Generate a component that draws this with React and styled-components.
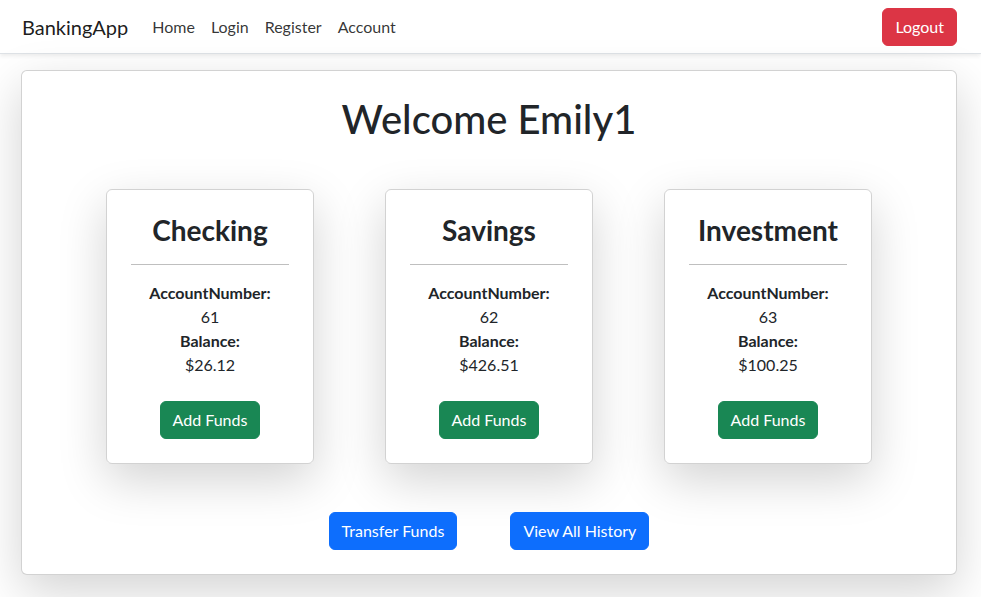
import React from 'react';
import styled, { createGlobalStyle } from 'styled-components';

const GlobalStyle = createGlobalStyle`
  body {
    margin: 0;
    background: #fff;
    color: #212529;
    font-family: Lato, "Liberation Sans", sans-serif;
    font-size: 16px;
    line-height: 1.5;
  }
  * { box-sizing: border-box; }
`;

// Navbar
const Navbar = styled.nav`
  display: flex;
  align-items: center;
  height: 54px;
  padding: 0 24px 0 22px;
  background: #fff;
  border-bottom: 1px solid #dee2e6;
  box-shadow: 0 0.125rem 0.25rem rgba(0, 0, 0, 0.075);
`;

const Brand = styled.a`
  font-size: 20px;
  color: rgba(0, 0, 0, 0.9);
  margin-right: 16px;
  text-decoration: none;
`;

const NavLinks = styled.div`
  display: flex;
  flex: 1;
`;

const NavLink = styled.a`
  padding: 8px;
  color: rgba(0, 0, 0, 0.8);
  text-decoration: none;
`;

const Button = styled.button`
  font-family: inherit;
  font-size: 16px;
  line-height: 24px;
  padding: 6px 12px;
  border-radius: 6px;
  border: 1px solid ${(p) => p.$bg};
  background: ${(p) => p.$bg};
  color: #fff;
  cursor: pointer;
`;

// Main card
const Main = styled.main`
  padding: 16px 24px 22px 21px;
`;

const Panel = styled.section`
  border: 1px solid rgba(0, 0, 0, 0.175);
  border-radius: 6px;
  background: #fff;
  padding: 24px;
  box-shadow: 0 1rem 3rem rgba(0, 0, 0, 0.175);
  text-align: center;
`;

const Title = styled.h1`
  margin: 0 0 46px;
  font-size: 40px;
  font-weight: 500;
  line-height: 1.2;
`;

const Accounts = styled.div`
  display: flex;
  justify-content: center;
  gap: 71px;
`;

const AccountCard = styled.div`
  width: 208px;
  padding: 24px;
  border: 1px solid rgba(0, 0, 0, 0.175);
  border-radius: 6px;
  box-shadow: 0 1rem 3rem rgba(0, 0, 0, 0.175);
`;

const AccountName = styled.h3`
  margin: 0 0 8px;
  font-size: 28px;
  font-weight: 700;
  line-height: 1.2;
`;

const Rule = styled.hr`
  margin: 16px 0;
  border: 0;
  border-top: 1px solid rgba(0, 0, 0, 0.25);
`;

const Details = styled.p`
  margin: 0 0 24px;
  line-height: 24px;
`;

const Label = styled.strong`
  display: block;
  font-weight: 700;
`;

const Value = styled.span`
  display: block;
`;

const Actions = styled.div`
  display: flex;
  justify-content: center;
  gap: 53px;
  margin-top: 48px;
`;

const accounts = [
  { name: 'Checking', number: 61, balance: '$26.12' },
  { name: 'Savings', number: 62, balance: '$426.51' },
  { name: 'Investment', number: 63, balance: '$100.25' },
];

const App = () => {
  return (
    <>
      <GlobalStyle />
      <Navbar>
        <Brand>BankingApp</Brand>
        <NavLinks>
          <NavLink>Home</NavLink>
          <NavLink>Login</NavLink>
          <NavLink>Register</NavLink>
          <NavLink>Account</NavLink>
        </NavLinks>
        <Button $bg="#dc3545">Logout</Button>
      </Navbar>

      <Main>
        <Panel>
          <Title>Welcome Emily1</Title>
          <Accounts>
            {accounts.map((a) => (
              <AccountCard key={a.number}>
                <AccountName>{a.name}</AccountName>
                <Rule />
                <Details>
                  <Label>AccountNumber:</Label>
                  <Value>{a.number}</Value>
                  <Label>Balance:</Label>
                  <Value>{a.balance}</Value>
                </Details>
                <Button $bg="#198754">Add Funds</Button>
              </AccountCard>
            ))}
          </Accounts>
          <Actions>
            <Button $bg="#0d6efd">Transfer Funds</Button>
            <Button $bg="#0d6efd">View All History</Button>
          </Actions>
        </Panel>
      </Main>
    </>
  );
};

export default App;
